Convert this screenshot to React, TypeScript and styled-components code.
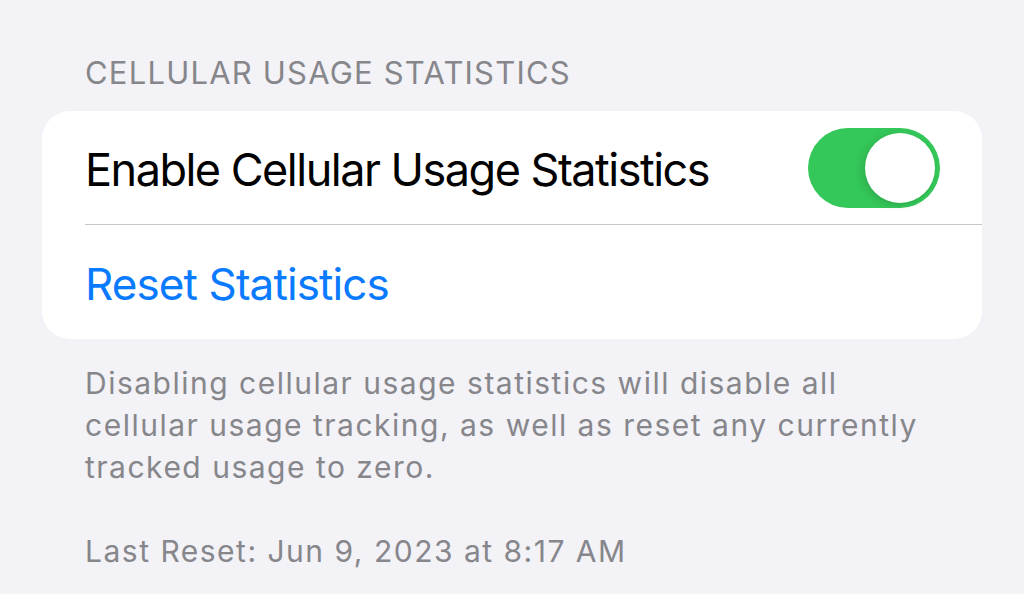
import { useState } from "react";
import styled, { createGlobalStyle } from "styled-components";

const GlobalStyle = createGlobalStyle`
  html, body {
    margin: 0;
    padding: 0;
    background: #F2F2F7;
  }
  body {
    font-family: 'Inter', 'Liberation Sans', sans-serif;
    -webkit-font-smoothing: antialiased;
  }
`;

const Page = styled.div`
  width: 1024px;
  height: 594px;
  box-sizing: border-box;
  padding: 54px 42px 0;
  background: #F2F2F7;
  overflow: hidden;
`;

const SectionHeader = styled.div`
  padding-left: 43px;
  font-size: 31px;
  line-height: 38px;
  letter-spacing: 1.2px;
  color: #86868B;
  text-transform: uppercase;
`;

const Card = styled.div`
  margin-top: 19px;
  background: #FFFFFF;
  border-radius: 28px;
  overflow: hidden;
`;

const Row = styled.div<{ $divider?: boolean }>`
  display: flex;
  align-items: center;
  justify-content: space-between;
  height: 114px;
  margin-left: 43px;
  padding-right: 42px;
  box-sizing: border-box;
  border-bottom: ${(p) => (p.$divider ? "1px solid #C6C6C8" : "none")};
`;

const Label = styled.div<{ $tint?: string }>`
  font-size: ${(p) => (p.$tint ? "44px" : "45px")};
  line-height: 54px;
  margin-top: 4px;
  letter-spacing: ${(p) => (p.$tint ? "-0.9px" : "-1.5px")};
  color: ${(p) => p.$tint ?? "#000000"};
`;

const SwitchTrack = styled.button<{ $on: boolean }>`
  position: relative;
  width: 132px;
  height: 80px;
  padding: 0;
  border: none;
  border-radius: 40px;
  background: ${(p) => (p.$on ? "#34C759" : "#E9E9EB")};
  cursor: pointer;
  flex-shrink: 0;
`;

const SwitchKnob = styled.span<{ $on: boolean }>`
  position: absolute;
  top: 5px;
  left: ${(p) => (p.$on ? "57px" : "5px")};
  width: 70px;
  height: 70px;
  border-radius: 50%;
  background: #FFFFFF;
  box-shadow: -3px 2px 8px rgba(0, 0, 0, 0.12), 0 2px 1px rgba(0, 0, 0, 0.04);
`;

const Footnote = styled.div`
  margin-top: 23px;
  padding-left: 43px;
  padding-right: 40px;
  font-size: 30px;
  line-height: 42px;
  letter-spacing: 1.5px;
  color: #86868B;
`;

const FootnoteGap = styled.div`
  height: 42px;
`;

function App() {
  const [enabled, setEnabled] = useState(true);

  return (
    <>
      <GlobalStyle />
      <Page>
        <SectionHeader>Cellular Usage Statistics</SectionHeader>
        <Card>
          <Row $divider>
            <Label>Enable Cellular Usage Statistics</Label>
            <SwitchTrack $on={enabled} onClick={() => setEnabled(!enabled)}>
              <SwitchKnob $on={enabled} />
            </SwitchTrack>
          </Row>
          <Row>
            <Label $tint="#0A7AFF">Reset Statistics</Label>
          </Row>
        </Card>
        <Footnote>
          Disabling cellular usage statistics will disable all cellular usage
          tracking, as well as reset any currently tracked usage to zero.
          <FootnoteGap />
          Last Reset: Jun 9, 2023 at 8:17 AM
        </Footnote>
      </Page>
    </>
  );
}

export default App;
